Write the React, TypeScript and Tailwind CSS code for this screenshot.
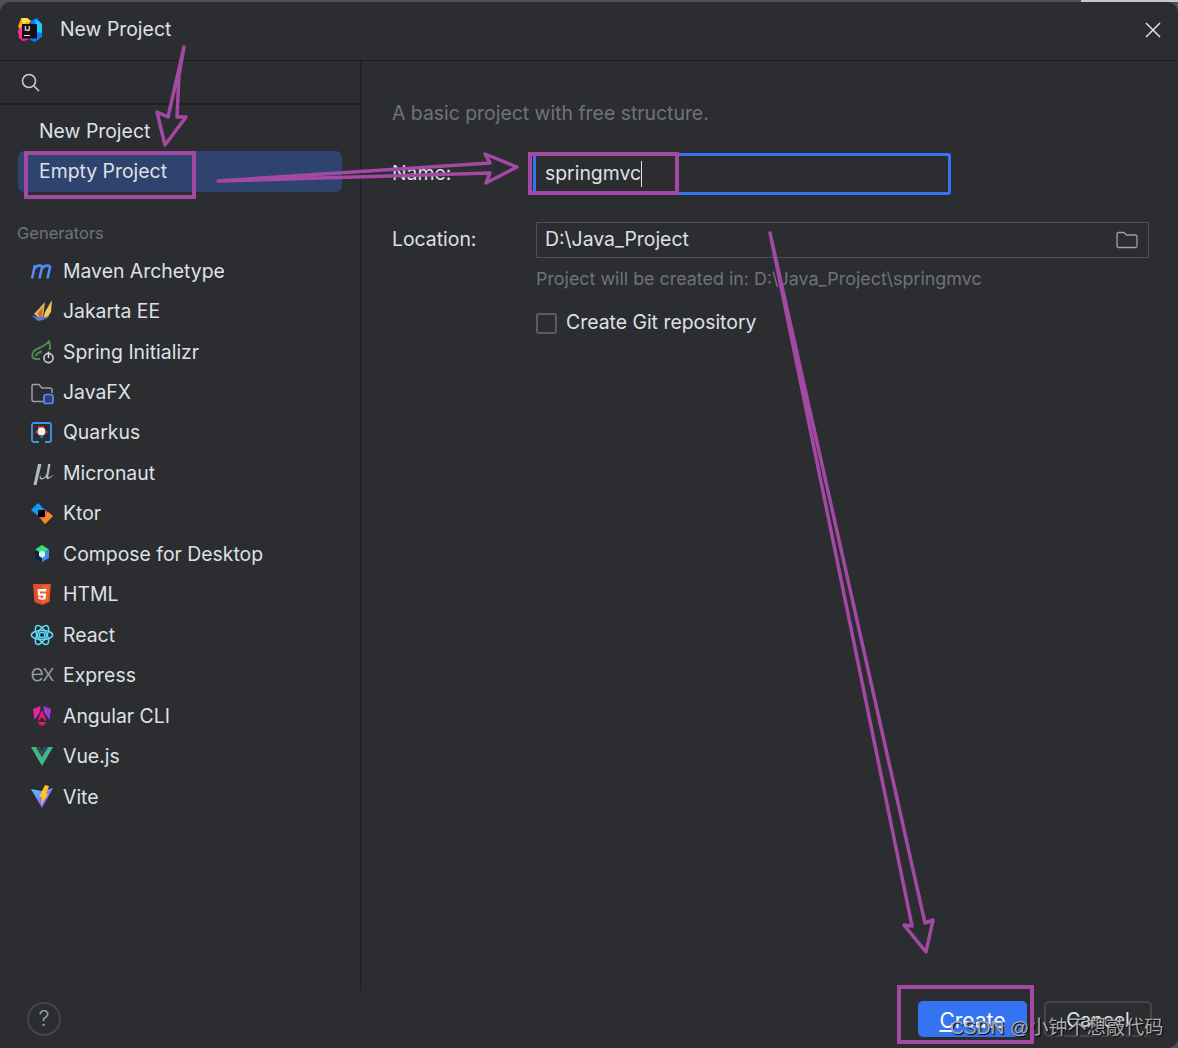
import React from "react";

const P = "#a349a4";

function IJ() {
  return (
    <svg width="24" height="24" viewBox="0 0 24 24">
      <polygon points="0,8 3,1 9,0 13,3 8,12 2,12" fill="#fca326" />
      <polygon points="3,0 9,0 13,3 5,6" fill="#fde047" />
      <polygon points="0,12 4,9 10,20 5,23 1,20" fill="#ff318c" />
      <polygon points="2,18 5,23 10,22 13,18" fill="#f0248c" />
      <polygon points="13,3 19,0 24,6 24,19 17,24 12,22" fill="#087cfa" />
      <polygon points="17,1 24,6 24,15 19,14" fill="#22c8f7" />
      <rect x="4" y="6" width="15" height="14.5" fill="#140d12" />
      <text x="6.5" y="13" fontSize="6.5" fontWeight="700" fill="#fff" fontFamily="Inter, sans-serif">IJ</text>
      <rect x="6" y="17" width="6" height="1" fill="#e8e8e8" />
    </svg>
  );
}

const icons: Record<string, React.ReactNode> = {
  maven: (
    <svg width="24" height="24" viewBox="0 0 24 24" fill="none" stroke="#548af7" strokeWidth="2.6" strokeLinecap="butt">
      <path d="M2 19.5 L5 6 M4 10 C6 6.5 11.5 5 12 8.5 L9.5 19.5 M11.5 10 C13.5 6.5 19.5 5 20 8.5 L17.5 19.5" />
    </svg>
  ),
  jakarta: (
    <svg width="24" height="24" viewBox="0 0 24 24">
      <polygon points="4,14 15,2 13,17 9,18" fill="#f0ad52" />
      <polygon points="8,13 13,7 12,17 9,18" fill="#b9744b" />
      <polygon points="15,12 22,0 21,12 17,18 13,19" fill="#f6c65b" />
      <polygon points="1,15 10,18 20,16 13,20 8,21" fill="#4d7cdc" />
    </svg>
  ),
  spring: (
    <svg width="24" height="24" viewBox="0 0 24 24" fill="none">
      <path d="M6 19 C2 19 1 15 4 11 C7 7.5 14 8 19 1 C20 4 20.5 7 19.5 10 M5 19 L10 19 M12 11.5 C9 12 7 13.5 5.5 16" stroke="#4e8a4f" strokeWidth="2" />
      <circle cx="18.5" cy="18" r="4.6" stroke="#ced0d6" strokeWidth="1.6" />
      <path d="M18.5 11.5 V18" stroke="#ced0d6" strokeWidth="1.6" />
    </svg>
  ),
  javafx: (
    <svg width="24" height="24" viewBox="0 0 24 24" fill="none">
      <path d="M14 20.5 H4 A2 2 0 0 1 2 18.5 V5 A1.5 1.5 0 0 1 3.5 3.5 H9 L12 7 H19.5 A2 2 0 0 1 22 9 V12" stroke="#9da0a8" strokeWidth="1.5" />
      <rect x="14" y="13.5" width="9" height="9" rx="2" fill="#2e436e" stroke="#548af7" strokeWidth="1.7" />
    </svg>
  ),
  quarkus: (
    <svg width="24" height="24" viewBox="0 0 24 24" fill="none">
      <path d="M9 21 H4 A2 2 0 0 1 2 19 V4 A2 2 0 0 1 4 2 H19 A2 2 0 0 1 21 4 V19 A2 2 0 0 1 19 21 H15" stroke="#4394e8" strokeWidth="1.8" />
      <polygon points="8,5 14,5.5 15,10 8,10" fill="#e8304b" />
      <circle cx="11.5" cy="10.5" r="4" fill="#f0f0f0" />
      <polygon points="15,9 18,11 15,13" fill="#e8304b" />
      <polygon points="7,9 8,13 5,11.5" fill="#e8304b" />
      <polygon points="9,14 14,14 12,18" fill="#3d6fc0" />
    </svg>
  ),
  micronaut: (
    <svg width="24" height="24" viewBox="0 0 24 24" fill="#b4b8bf">
      <polygon points="8,3 11.5,3 6.5,24 3.5,24" />
      <path d="M10.5 12 C9.5 16 11 17.5 13 17 C15 16.5 16.2 14 16.8 12 L18 3 L20.5 3 L18.3 15 C18 17 19.5 17 22.5 14 L22.8 14.6 C19.5 18.5 16.5 19.5 16 16 C14 18.5 10.5 19.5 9.5 17 Z" />
    </svg>
  ),
  compose: (
    <svg width="24" height="24" viewBox="0 0 24 24">
      <polygon points="12,3 19,7.5 12,12 5,7.5" fill="#3ddc84" />
      <polygon points="5,7.5 12,12 12,20 5,16" fill="#0a2540" />
      <polygon points="19,7.5 12,12 12,20 19,16" fill="#4285f4" />
      <polygon points="12,8.5 15,10.5 15,14 12,16 9,14 9,10.5" fill="#d4f5e2" />
    </svg>
  ),
  ktor: (
    <svg width="24" height="24" viewBox="0 0 24 24">
      <polygon points="8,1 14,7 8,14 1,8" fill="#0d9cf5" />
      <polygon points="14,7 23,14 15,22 8,14" fill="#e8558a" />
      <polygon points="18,10 23,14 15,22 12,18" fill="#f58a1f" />
      <rect x="8" y="8" width="7" height="7" fill="#000" />
    </svg>
  ),
  html: (
    <svg width="24" height="24" viewBox="0 0 24 24">
      <polygon points="3,1 21,1 19.5,19 12,22 4.5,19" fill="#e44d26" />
      <polygon points="12,2.5 19.5,2.5 18.3,18 12,20.5" fill="#f16529" />
      <path d="M7.5 6 H16.5 L16.2 8.5 H10 L10.2 10.5 H16 L15.5 16 L12 17 L8.5 16 L8.3 13.5 H10.5 L10.6 14.5 L12 14.9 L13.4 14.5 L13.6 12.7 H8" fill="#fff" />
    </svg>
  ),
  react: (
    <svg width="26" height="24" viewBox="0 0 26 24" fill="none" stroke="#61dafb" strokeWidth="1.6">
      <circle cx="13" cy="12" r="3" />
      <ellipse cx="13" cy="12" rx="11.5" ry="5" />
      <ellipse cx="13" cy="12" rx="11.5" ry="5" transform="rotate(60 13 12)" />
      <ellipse cx="13" cy="12" rx="11.5" ry="5" transform="rotate(120 13 12)" />
    </svg>
  ),
  angular: (
    <svg width="24" height="24" viewBox="0 0 24 24">
      <polygon points="10.5,2 3,5 4.5,16 10,8" fill="#e6249c" />
      <polygon points="13.5,2 21,5 19.5,16 14,8" fill="#9a3bd8" />
      <polygon points="12,6 16.5,16.5 14.5,16.5 13.5,14 10.5,14 9.5,16.5 7.5,16.5" fill="#e0187c" />
      <polygon points="8,18 16,18 15,20.5 12,22 9,20.5" fill="#e0186c" />
    </svg>
  ),
  vue: (
    <svg width="24" height="24" viewBox="0 0 24 24">
      <polygon points="1,2 6,2 12,12 18,2 23,2 12,21" fill="#41b883" />
      <polygon points="6,2 10,2 12,5.5 14,2 18,2 12,12" fill="#35495e" />
    </svg>
  ),
  vite: (
    <svg width="24" height="24" viewBox="0 0 24 24">
      <defs>
        <linearGradient id="vg" x1="0" y1="0" x2="1" y2="1">
          <stop offset="0" stopColor="#41d1ff" />
          <stop offset="1" stopColor="#bd34fe" />
        </linearGradient>
      </defs>
      <polygon points="1,4 12,6 23,3 12,23" fill="url(#vg)" />
      <polygon points="15,0 19,1 16,9 18,9 11,20 12,12 9,12" fill="#ffc517" />
    </svg>
  ),
};

const items: [string, React.ReactNode][] = [
  ["Maven Archetype", icons.maven],
  ["Jakarta EE", icons.jakarta],
  ["Spring Initializr", icons.spring],
  ["JavaFX", icons.javafx],
  ["Quarkus", icons.quarkus],
  ["Micronaut", icons.micronaut],
  ["Ktor", icons.ktor],
  ["Compose for Desktop", icons.compose],
  ["HTML", icons.html],
  ["React", icons.react],
  ["Express", <span className="relative top-[-2px] text-[23px] leading-none font-light tracking-[-1px] text-[#9da0a8]">ex</span>],
  ["Angular CLI", icons.angular],
  ["Vue.js", icons.vue],
  ["Vite", icons.vite],
];

export default function App() {
  return (
    <div className="relative h-[1048px] w-[1178px] overflow-hidden bg-[#505154] pt-[2px] font-['Inter',sans-serif] text-[19.4px] text-[#dfe1e5]">
      <div className="absolute right-0 top-0 h-[2px] w-[97px] bg-[#c8c8c8]" />
      <div className="relative flex h-[1046px] flex-col rounded-t-[11px] rounded-br-[10px] bg-[#2b2d30]">
        <div className="flex h-[59px] shrink-0 items-center border-b border-[#1e1f22] pb-[3px] pl-[18px] pr-[16px]">
          <IJ />
          <span className="ml-[18px]">New Project</span>
          <svg className="ml-auto" width="18" height="18" viewBox="0 0 18 18" stroke="#dfe1e5" strokeWidth="1.5">
            <path d="M2 2 L16 16 M16 2 L2 16" />
          </svg>
        </div>
        <div className="flex min-h-0 flex-1">
          <div className="flex w-[361px] shrink-0 flex-col border-r border-[#1e1f22]">
            <div className="flex h-[44px] shrink-0 items-center border-b-2 border-[#1e1f22] pl-[20px]">
              <svg width="20" height="20" viewBox="0 0 20 20" fill="none" stroke="#ced0d6" strokeWidth="1.5">
                <circle cx="9" cy="9" r="6.5" />
                <path d="M14 14 L19 19" />
              </svg>
            </div>
            <div className="flex h-[46px] shrink-0 items-end pb-[5px] pl-[39px]">New Project</div>
            <div className="mx-[18px] flex h-[41px] shrink-0 items-center rounded-[6px] bg-[#2e436e] pl-[21px]">Empty Project</div>
            <div className="mb-[6px] mt-[29px] pl-[17px] text-[16.5px] leading-[24px] text-[#6f737a]">Generators</div>
            {items.map(([label, icon]) => (
              <div key={label} className="flex h-[40.46px] shrink-0 items-center pl-[30px]">
                <span className="flex h-[24px] w-[24px] items-center justify-center">{icon}</span>
                <span className="ml-[9px]">{label}</span>
              </div>
            ))}
          </div>
          <div className="flex min-w-0 flex-1 flex-col pl-[31px] pr-[29px] pt-[38px]">
            <div className="leading-[28px] text-[#6f737a]">A basic project with free structure.</div>
            <div className="mt-[26px] flex h-[42px] items-center">
              <span className="w-[141px]">Name:</span>
              <div className="flex h-[42px] w-[418px] items-center rounded-[3px] border-[3px] border-[#3574f0] pl-[9px]">
                <span>springmvc</span>
                <span className="h-[26px] w-px bg-[#dfe1e5]" />
              </div>
            </div>
            <div className="mt-[27px] flex h-[36px] items-center">
              <span className="w-[144px]">Location:</span>
              <div className="flex h-[36px] flex-1 items-center justify-between border border-[#4e5157] pl-[8px] pr-[10px]">
                <span>D:\Java_Project</span>
                <svg width="22" height="18" viewBox="0 0 22 18" fill="none" stroke="#9da0a8" strokeWidth="1.3">
                  <path d="M1 3 A1.5 1.5 0 0 1 2.5 1.5 H8 L10.5 4 H19.5 A1.5 1.5 0 0 1 21 5.5 V15 A1.5 1.5 0 0 1 19.5 16.5 H2.5 A1.5 1.5 0 0 1 1 15 Z" />
                </svg>
              </div>
            </div>
            <div className="mt-[9px] pl-[144px] text-[17.9px] leading-[24px] text-[#6f737a]">Project will be created in: D:\Java_Project\springmvc</div>
            <div className="mt-[20px] flex h-[24px] items-center pl-[144px]">
              <span className="h-[21px] w-[21px] rounded-[3px] border-2 border-[#5a5d63]" />
              <span className="ml-[9px]">Create Git repository</span>
            </div>
          </div>
        </div>
        <div className="flex h-[57px] shrink-0 items-center justify-between pl-[27px] pr-[26px] pb-[2px]">
          <span className="flex h-[34px] w-[34px] items-center justify-center rounded-full border-2 border-[#43454a] text-[22px] font-light text-[#9da0a8]">?</span>
          <div className="flex gap-[17px]">
            <button className="flex h-[36px] w-[109px] items-center justify-center rounded-[5px] bg-[#3574f0] pt-[4px] text-[21px] text-white"><span><u>C</u>reate</span></button>
            <button className="flex h-[36px] w-[108px] items-center justify-center rounded-[5px] border-2 border-[#43454a] pt-[4px]">Cancel</button>
          </div>
        </div>
      </div>

      <span className="absolute left-[950px] top-[1016px] whitespace-nowrap font-['Liberation_Sans','Noto_Sans_CJK_SC',sans-serif] text-[19.2px] leading-[24px] text-[#a9abb0] [text-shadow:1px_1px_1px_#000]">CSDN @小钟不想敲代码</span>

      <svg className="pointer-events-none absolute left-0 top-0" width="1178" height="1048" fill="none" stroke={P} strokeLinejoin="round" strokeLinecap="round">
        <g strokeWidth="3.5">
          <path d="M184 47 L168 117 L157 112 L165 145 L186 117 L177 117 L179 75 Z" />
          <path d="M218 181 L490 163 L485 154 L517 167 L486 183 L490 173 Z" />
          <path d="M770 233 L912 926 L904 925 L926 952 L933 920 L925 923 Z" />
        </g>
        <g strokeWidth="4" strokeLinejoin="miter">
          <rect x="26" y="153" width="168" height="44" />
          <rect x="530" y="154" width="147" height="39" />
          <rect x="899" y="987" width="133" height="55" />
        </g>
      </svg>
    </div>
  );
}
